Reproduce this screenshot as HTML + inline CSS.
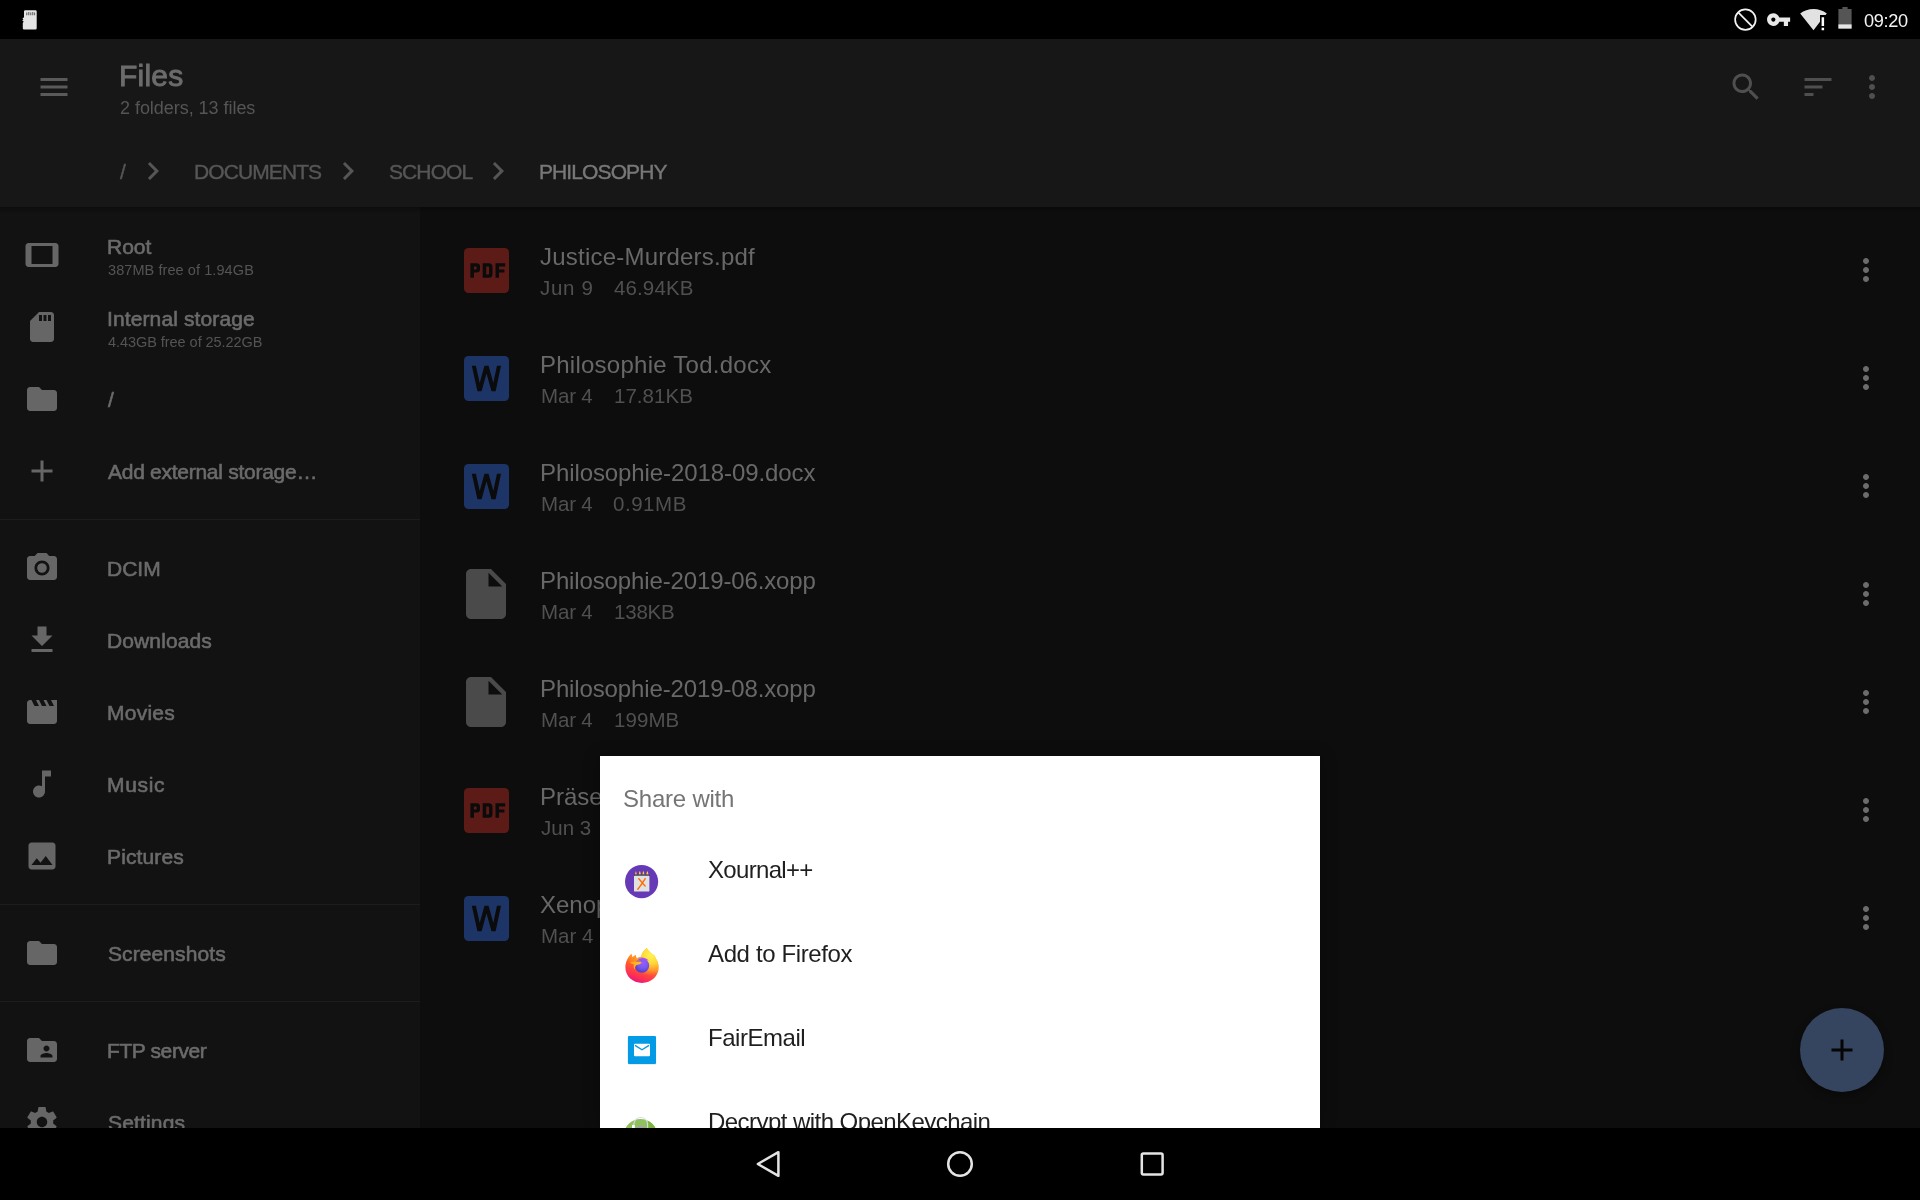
<!DOCTYPE html>
<html>
<head>
<meta charset="utf-8">
<title>Files</title>
<style>
html,body{margin:0;padding:0;background:#000;}
body{width:1920px;height:1200px;position:relative;overflow:hidden;font-family:"Liberation Sans",sans-serif;}
.abs{position:absolute;}
.t{position:absolute;white-space:nowrap;line-height:1;will-change:transform;}
svg{position:absolute;display:block;}
#status{left:0;top:0;width:1920px;height:39px;background:#000;}
#appbar{left:0;top:39px;width:1920px;height:168px;background:#171717;}
#abin{left:0;top:1px;width:1920px;height:167px;}
#shadow{left:0;top:207px;width:1920px;height:7px;background:linear-gradient(rgba(0,0,0,.28),rgba(0,0,0,0));}
#side{left:0;top:207px;width:420px;height:921px;background:#121212;overflow:hidden;}
#main{left:420px;top:207px;width:1500px;height:921px;background:#0d0d0d;overflow:hidden;}
#nav{left:0;top:1128px;width:1920px;height:72px;background:#000;}
.st{color:#6b6b6b;font-size:21px;left:108px;-webkit-text-stroke:.6px #6b6b6b;}
.ss{color:#545454;font-size:14.5px;left:108px;}
.fn{color:#686868;font-size:24px;left:540px;}
.fs{color:#505050;font-size:20.5px;left:540px;}
.sep{position:absolute;left:0;width:420px;height:1px;background:#1d1d1d;}
#dlg{left:600px;top:756px;width:720px;height:372px;background:#fff;overflow:hidden;box-shadow:0 0 14px rgba(0,0,0,.35);}
.an{color:#1f1f1f;font-size:24px;left:108px;}
.fi{width:45px;height:45px;border-radius:4.500px;}
.pdf{left:0;width:45px;text-align:center;top:14.500px;font-size:17px;font-weight:bold;color:#0a0a0a;letter-spacing:.5px;-webkit-text-stroke:.9px #0a0a0a;transform:scaleX(.86);}
.wl{left:0;width:45px;text-align:center;top:5px;font-size:35px;color:#0a0a0a;-webkit-text-stroke:.7px #0a0a0a;transform:scaleX(.88);}
</style>
</head>
<body>
<div id="status" class="abs">
<!-- sd card notification -->
<svg style="left:22px;top:9.5px" width="15" height="20" viewBox="0 0 15 20"><path d="M3.2 0.3h10.3a1.2 1.2 0 0 1 1.2 1.2v16.8a1.2 1.2 0 0 1-1.2 1.2H2a1.2 1.2 0 0 1-1.2-1.2v-5.6l1-.9-1.6-1.4 1.2-1 -1-1 1.6-1.2V1.5a1.2 1.2 0 0 1 1.2-1.2z" fill="#e4e4e4"/><path d="M4.3 2.6h1v2.6h-1zM6.3 2h1v3.2h-1zM8.3 2.6h1v2.6h-1zM10.3 2h1v3.2h-1zM12.2 2.6h.9v2.6h-.9z" fill="#555"/></svg>
<!-- blocked -->
<svg style="left:1733px;top:8px" width="25" height="24" viewBox="0 0 25 24"><circle cx="12.4" cy="11.6" r="10.3" fill="none" stroke="#f2f2f2" stroke-width="1.7"/><path d="M5.2 4.4L19.6 18.8" stroke="#f2f2f2" stroke-width="1.7" fill="none"/></svg>
<!-- vpn key -->
<svg style="left:1765.850px;top:6.900px" width="25.200" height="25.200" viewBox="0 0 24 24"><path fill="#e8e8e8" d="M12.65 10C11.83 7.67 9.61 6 7 6c-3.31 0-6 2.69-6 6s2.69 6 6 6c2.61 0 4.83-1.67 5.65-4H17v4h4v-4h2v-4H12.65zM7 14c-1.1 0-2-.9-2-2s.9-2 2-2 2 .9 2 2-.9 2-2 2z"/></svg>
<!-- wifi -->
<svg style="left:1799px;top:8px" width="30" height="24" viewBox="0 0 30 24"><path fill="#e2e2e2" d="M1.2 5.5C5 2.5 9.500 1 14.500 1c5 0 9.500 1.500 13.300 4.500l-1.300 1.600H21V13.700L14.500 22.200z"/><path fill="#fff" d="M22.600 9.200h2.500v8.800h-2.500zM22.600 19.700h2.500v2.500h-2.500z"/></svg>
<!-- battery -->
<svg style="left:1837px;top:6px" width="16" height="24" viewBox="0 0 16 24"><path fill="#555" d="M5.400 1h5.200v2h4V22.600H1.400V3h4z"/><path fill="#e6e6e6" d="M1.400 18.400H14.600V22.600H1.400z"/></svg>
<div class="t" id="clock" style="left:1863px;top:12px;font-size:18.200px;color:#f4f4f4;letter-spacing:-0.33px;margin-left:0.91px">09:20</div>
</div>
<div id="appbar" class="abs"><div id="abin" class="abs">
<svg style="left:36px;top:29px" width="36" height="36" viewBox="0 0 24 24"><path fill="#5a5a5a" d="M3 18h18v-2H3v2zm0-5h18v-2H3v2zm0-7v2h18V6H3z"/></svg>
<div class="t" id="title" style="left:120px;top:21px;font-size:30px;color:#6c6c6c;-webkit-text-stroke:.9px #6c6c6c;letter-spacing:0.22px;margin-left:-0.90px">Files</div>
<div class="t" id="subtitle" style="left:120px;top:59px;font-size:18px;color:#555;letter-spacing:-0.04px;margin-left:-0.36px">2 folders, 13 files</div>
<svg style="left:1728px;top:29px" width="36" height="36" viewBox="0 0 24 24"><path fill="#4f4f4f" d="M15.5 14h-.79l-.28-.27C15.41 12.59 16 11.11 16 9.5 16 5.91 13.09 3 9.500 3S3 5.910 3 9.500 5.910 16 9.500 16c1.610 0 3.090-.590 4.230-1.570l.270.280v.790l5 4.990L20.490 19l-4.990-5zm-6 0C7.010 14 5 11.990 5 9.500S7.010 5 9.500 5 14 7.010 14 9.500 11.990 14 9.500 14z"/></svg>
<svg style="left:1800px;top:29px" width="36" height="36" viewBox="0 0 24 24"><path fill="#4f4f4f" d="M3 18h6v-2H3v2zM3 6v2h18V6H3zm0 7h12v-2H3v2z"/></svg>
<svg style="left:1854px;top:29px" width="36" height="36" viewBox="0 0 24 24"><path fill="#4f4f4f" d="M12 8c1.1 0 2-.9 2-2s-.9-2-2-2-2 .9-2 2 .9 2 2 2zm0 2c-1.1 0-2 .9-2 2s.9 2 2 2 2-.9 2-2-.9-2-2-2zm0 6c-1.1 0-2 .9-2 2s.9 2 2 2 2-.9 2-2-.9-2-2-2z"/></svg>
<div class="t bc" style="left:120px;top:121px;font-size:21px;color:#565656;-webkit-text-stroke:.4px #565656">/</div>
<svg style="left:135px;top:113px" width="36" height="36" viewBox="0 0 24 24"><path fill="#565656" d="M10 6L8.59 7.41 13.17 12l-4.58 4.59L10 18l6-6z"/></svg>
<div class="t bc" id="bc1" style="left:195px;top:121px;font-size:21px;color:#565656;-webkit-text-stroke:.4px #565656;letter-spacing:-0.90px;margin-left:-0.72px">DOCUMENTS</div>
<svg style="left:330px;top:113px" width="36" height="36" viewBox="0 0 24 24"><path fill="#565656" d="M10 6L8.59 7.41 13.17 12l-4.58 4.59L10 18l6-6z"/></svg>
<div class="t bc" id="bc2" style="left:390px;top:121px;font-size:21px;color:#565656;-webkit-text-stroke:.4px #565656;letter-spacing:-0.90px;margin-left:-0.90px">SCHOOL</div>
<svg style="left:480px;top:113px" width="36" height="36" viewBox="0 0 24 24"><path fill="#565656" d="M10 6L8.59 7.41 13.17 12l-4.58 4.59L10 18l6-6z"/></svg>
<div class="t bc" id="bc3" style="left:540px;top:121px;font-size:21px;color:#787878;-webkit-text-stroke:.4px #787878;letter-spacing:-0.90px;margin-left:-0.90px">PHILOSOPHY</div>
</div></div>
<div id="side" class="abs">
<svg style="left:24px;top:30px" width="36" height="36" viewBox="0 0 24 24"><path fill="#666" d="M21 4H3c-1.1 0-2 .9-2 2v12c0 1.1.9 2 2 2h18c1.1 0 2-.9 2-2V6c0-1.1-.9-2-2-2zm-2 14H5V6h14v12z"/></svg>
<div class="t st" id="r1" style="top:28.8px;letter-spacing:0.00px;margin-left:-0.90px">Root</div>
<div class="t ss" id="r1s" style="top:56.3px;letter-spacing:0.08px;margin-left:0.00px">387MB free of 1.94GB</div>
<svg style="left:24px;top:102px" width="36" height="36" viewBox="0 0 24 24"><path fill="#666" d="M18 2h-8L4.02 8 4 20c0 1.1.9 2 2 2h12c1.1 0 2-.9 2-2V4c0-1.1-.9-2-2-2zm-6 6h-2V4h2v4zm3 0h-2V4h2v4zm3 0h-2V4h2v4z"/></svg>
<div class="t st" id="r2" style="top:100.8px;letter-spacing:0.12px;margin-left:-0.90px">Internal storage</div>
<div class="t ss" id="r2s" style="top:128.3px;letter-spacing:-0.05px;margin-left:0.00px">4.43GB free of 25.22GB</div>
<svg style="left:24px;top:174px" width="36" height="36" viewBox="0 0 24 24"><path fill="#666" d="M10 4H4c-1.1 0-1.99.9-1.99 2L2 18c0 1.1.9 2 2 2h16c1.1 0 2-.9 2-2V8c0-1.1-.9-2-2-2h-8l-2-2z"/></svg>
<div class="t st" id="s3" style="top:182px">/</div>
<svg style="left:24px;top:246px" width="36" height="36" viewBox="0 0 24 24"><path fill="#666" d="M19 13h-6v6h-2v-6H5v-2h6V5h2v6h6v2z"/></svg>
<div class="t st" id="s4" style="top:254px;letter-spacing:-0.27px;margin-left:0.00px">Add external storage…</div>
<svg style="left:24px;top:343px" width="36" height="36" viewBox="0 0 24 24"><path fill="#666" fill-rule="evenodd" d="M9 2L7.17 4H4c-1.1 0-2 .9-2 2v12c0 1.1.9 2 2 2h16c1.1 0 2-.9 2-2V6c0-1.1-.9-2-2-2h-3.17L15 2H9zm3 15c-2.76 0-5-2.24-5-5s2.24-5 5-5 5 2.24 5 5-2.24 5-5 5zm0-8.2a3.2 3.2 0 1 0 0 6.4 3.2 3.2 0 0 0 0-6.4z"/></svg>
<div class="t st" id="s5" style="top:351px;letter-spacing:0.00px;margin-left:-0.90px">DCIM</div>
<svg style="left:24px;top:415px" width="36" height="36" viewBox="0 0 24 24"><path fill="#666" d="M19 9h-4V3H9v6H5l7 7 7-7zM5 18v2h14v-2H5z"/></svg>
<div class="t st" id="s6" style="top:423px;letter-spacing:0.11px;margin-left:-0.90px">Downloads</div>
<svg style="left:24px;top:487px" width="36" height="36" viewBox="0 0 24 24"><path fill="#666" d="M18 4l2 4h-3l-2-4h-2l2 4h-3l-2-4H8l2 4H7L5 4H4c-1.1 0-1.99.9-1.99 2L2 18c0 1.1.9 2 2 2h16c1.1 0 2-.9 2-2V4h-4z"/></svg>
<div class="t st" id="s7" style="top:495px;letter-spacing:0.24px;margin-left:-0.90px">Movies</div>
<svg style="left:24px;top:559px" width="36" height="36" viewBox="0 0 24 24"><path fill="#666" d="M12 3v10.55c-.59-.34-1.27-.55-2-.55-2.21 0-4 1.79-4 4s1.79 4 4 4 4-1.79 4-4V7h4V3h-6z"/></svg>
<div class="t st" id="s8" style="top:567px;letter-spacing:0.67px;margin-left:-0.90px">Music</div>
<svg style="left:24px;top:631px" width="36" height="36" viewBox="0 0 24 24"><path fill="#666" d="M21 19V5c0-1.1-.9-2-2-2H5c-1.1 0-2 .9-2 2v14c0 1.1.9 2 2 2h14c1.1 0 2-.9 2-2zM8.5 13.5l2.5 3.01L14.5 12l4.5 6H5l3.5-4.5z"/></svg>
<div class="t st" id="s9" style="top:639px;letter-spacing:0.13px;margin-left:-0.90px">Pictures</div>
<svg style="left:24px;top:728px" width="36" height="36" viewBox="0 0 24 24"><path fill="#666" d="M10 4H4c-1.1 0-1.99.9-1.99 2L2 18c0 1.1.9 2 2 2h16c1.1 0 2-.9 2-2V8c0-1.1-.9-2-2-2h-8l-2-2z"/></svg>
<div class="t st" id="s10" style="top:736px;letter-spacing:0.09px;margin-left:0.00px">Screenshots</div>
<svg style="left:24px;top:825px" width="36" height="36" viewBox="0 0 24 24"><path fill="#666" d="M20 6h-8l-2-2H4c-1.1 0-1.99.9-1.99 2L2 18c0 1.1.9 2 2 2h16c1.1 0 2-.9 2-2V8c0-1.1-.9-2-2-2zm-5 3c1.1 0 2 .9 2 2s-.9 2-2 2-2-.9-2-2 .9-2 2-2zm4 8h-8v-1c0-1.33 2.67-2 4-2s4 .67 4 2v1z"/></svg>
<div class="t st" id="s11" style="top:833px;letter-spacing:-0.40px;margin-left:-0.90px">FTP server</div>
<svg style="left:24px;top:897px" width="36" height="36" viewBox="0 0 24 24"><path fill="#666" d="M19.43 12.98c.04-.32.07-.64.07-.98s-.03-.66-.07-.98l2.11-1.65c.19-.15.24-.42.12-.64l-2-3.46c-.12-.22-.39-.3-.61-.22l-2.49 1c-.52-.4-1.08-.73-1.69-.98l-.38-2.65C14.46 2.18 14.25 2 14 2h-4c-.25 0-.46.18-.49.42l-.38 2.65c-.61.25-1.17.59-1.69.98l-2.49-1c-.23-.09-.49 0-.61.22l-2 3.46c-.13.22-.07.49.12.64l2.11 1.65c-.04.32-.07.65-.07.98s.03.66.07.98l-2.11 1.65c-.19.15-.24.42-.12.64l2 3.46c.12.22.39.3.61.22l2.49-1c.52.4 1.08.73 1.69.98l.38 2.65c.03.24.24.42.49.42h4c.25 0 .46-.18.49-.42l.38-2.65c.61-.25 1.17-.59 1.69-.98l2.49 1c.23.09.49 0 .61-.22l2-3.46c.12-.22.07-.49-.12-.64l-2.11-1.65zM12 15.5c-1.93 0-3.5-1.57-3.5-3.5s1.57-3.5 3.5-3.5 3.5 1.57 3.5 3.5-1.57 3.5-3.5 3.5z"/></svg>
<div class="t st" id="s12" style="top:905px;letter-spacing:0.16px;margin-left:0.00px">Settings</div>
<div class="sep" style="top:312px"></div>
<div class="sep" style="top:697px"></div>
<div class="sep" style="top:794px"></div>
</div>
<div id="main" class="abs">
<div class="abs fi" style="left:43.5px;top:40.5px;background:#5c1b16"><svg style="left:0;top:0" width="45" height="45" viewBox="0 0 45 45"><path fill="#0b0b0b" fill-rule="evenodd" d="M6.4 15.3h6.200q3.400 0 3.400 3.300v2.700q0 3.300-3.400 3.300h-2.700v5.200H6.400zM9.900 18.500v3h1.900q.900 0 .900-.900v-1.200q0-.900-.900-.900zM18.700 15.300h6.200q3.600 0 3.600 3.500v7.500q0 3.500-3.600 3.500h-6.200zM22.200 18.500v8.100h1.900q1 0 1-1v-6.100q0-1-1-1zM31.500 15.300h9.700v3.200h-6.200v3h5.400v3.100h-5.400v5.200h-3.500z"/></svg></div>
<div class="t fn" id="f0" style="left:120px;top:38.2px;letter-spacing:0.22px;margin-left:0.00px">Justice-Murders.pdf</div>
<div class="t fs" id="d0" style="left:120px;top:70.8px;letter-spacing:0.68px;margin-left:0.00px">Jun 9</div>
<div class="t fs" id="z0" style="left:193px;top:70.8px;letter-spacing:0.12px;margin-left:0.54px">46.94KB</div>
<svg style="left:1428px;top:45px" width="36" height="36" viewBox="0 0 24 24"><path fill="#6c6c6c" d="M12 8c1.1 0 2-.9 2-2s-.9-2-2-2-2 .9-2 2 .9 2 2 2zm0 2c-1.1 0-2 .9-2 2s.9 2 2 2 2-.9 2-2-.9-2-2-2zm0 6c-1.1 0-2 .9-2 2s.9 2 2 2 2-.9 2-2-.9-2-2-2z"/></svg>
<div class="abs fi" style="left:43.5px;top:148.5px;background:#1d3566"><svg style="left:0;top:0" width="45" height="45" viewBox="0 0 45 45"><clipPath id="wc1"><rect x="0" y="9.850" width="45" height="25.500"/></clipPath><polyline clip-path="url(#wc1)" points="9,6 15.500,35.350 22.500,9.850 29.600,35.350 35.750,6" fill="none" stroke="#0b0b0b" stroke-width="4" stroke-linejoin="miter" stroke-miterlimit="10"/></svg></div>
<div class="t fn" id="f1" style="left:120px;top:146.2px;letter-spacing:0.25px;margin-left:-0.27px">Philosophie Tod.docx</div>
<div class="t fs" id="d1" style="left:120px;top:178.8px;letter-spacing:-0.16px;margin-left:0.63px">Mar 4</div>
<div class="t fs" id="z1" style="left:193px;top:178.8px;letter-spacing:0.03px;margin-left:0.99px">17.81KB</div>
<svg style="left:1428px;top:153px" width="36" height="36" viewBox="0 0 24 24"><path fill="#6c6c6c" d="M12 8c1.1 0 2-.9 2-2s-.9-2-2-2-2 .9-2 2 .9 2 2 2zm0 2c-1.1 0-2 .9-2 2s.9 2 2 2 2-.9 2-2-.9-2-2-2zm0 6c-1.1 0-2 .9-2 2s.9 2 2 2 2-.9 2-2-.9-2-2-2z"/></svg>
<div class="abs fi" style="left:43.5px;top:256.5px;background:#1d3566"><svg style="left:0;top:0" width="45" height="45" viewBox="0 0 45 45"><clipPath id="wc2"><rect x="0" y="9.850" width="45" height="25.500"/></clipPath><polyline clip-path="url(#wc2)" points="9,6 15.500,35.350 22.500,9.850 29.600,35.350 35.750,6" fill="none" stroke="#0b0b0b" stroke-width="4" stroke-linejoin="miter" stroke-miterlimit="10"/></svg></div>
<div class="t fn" id="f2" style="left:120px;top:254.2px;letter-spacing:-0.09px;margin-left:-0.27px">Philosophie-2018-09.docx</div>
<div class="t fs" id="d2" style="left:120px;top:286.8px;letter-spacing:-0.16px;margin-left:0.63px">Mar 4</div>
<div class="t fs" id="z2" style="left:193px;top:286.8px;letter-spacing:0.54px;margin-left:-0.36px">0.91MB</div>
<svg style="left:1428px;top:261px" width="36" height="36" viewBox="0 0 24 24"><path fill="#6c6c6c" d="M12 8c1.1 0 2-.9 2-2s-.9-2-2-2-2 .9-2 2 .9 2 2 2zm0 2c-1.1 0-2 .9-2 2s.9 2 2 2 2-.9 2-2-.9-2-2-2zm0 6c-1.1 0-2 .9-2 2s.9 2 2 2 2-.9 2-2-.9-2-2-2z"/></svg>
<svg style="left:36px;top:357px" width="60" height="60" viewBox="0 0 24 24"><path fill="#4a4a4a" d="M6 2c-1.1 0-1.99.9-1.99 2L4 20c0 1.1.89 2 1.99 2H18c1.1 0 2-.9 2-2V8l-6-6H6zm7 7V3.5L18.5 9H13z"/></svg>
<div class="t fn" id="f3" style="left:120px;top:362.2px;letter-spacing:-0.13px;margin-left:-0.27px">Philosophie-2019-06.xopp</div>
<div class="t fs" id="d3" style="left:120px;top:394.8px;letter-spacing:-0.16px;margin-left:0.63px">Mar 4</div>
<div class="t fs" id="z3" style="left:193px;top:394.8px;letter-spacing:-0.21px;margin-left:1.17px">138KB</div>
<svg style="left:1428px;top:369px" width="36" height="36" viewBox="0 0 24 24"><path fill="#6c6c6c" d="M12 8c1.1 0 2-.9 2-2s-.9-2-2-2-2 .9-2 2 .9 2 2 2zm0 2c-1.1 0-2 .9-2 2s.9 2 2 2 2-.9 2-2-.9-2-2-2zm0 6c-1.1 0-2 .9-2 2s.9 2 2 2 2-.9 2-2-.9-2-2-2z"/></svg>
<svg style="left:36px;top:465px" width="60" height="60" viewBox="0 0 24 24"><path fill="#4a4a4a" d="M6 2c-1.1 0-1.99.9-1.99 2L4 20c0 1.1.89 2 1.99 2H18c1.1 0 2-.9 2-2V8l-6-6H6zm7 7V3.5L18.5 9H13z"/></svg>
<div class="t fn" id="f4" style="left:120px;top:470.2px;letter-spacing:-0.13px;margin-left:-0.27px">Philosophie-2019-08.xopp</div>
<div class="t fs" id="d4" style="left:120px;top:502.8px;letter-spacing:-0.16px;margin-left:0.63px">Mar 4</div>
<div class="t fs" id="z4" style="left:193px;top:502.8px;letter-spacing:0.07px;margin-left:1.35px">199MB</div>
<svg style="left:1428px;top:477px" width="36" height="36" viewBox="0 0 24 24"><path fill="#6c6c6c" d="M12 8c1.1 0 2-.9 2-2s-.9-2-2-2-2 .9-2 2 .9 2 2 2zm0 2c-1.1 0-2 .9-2 2s.9 2 2 2 2-.9 2-2-.9-2-2-2zm0 6c-1.1 0-2 .9-2 2s.9 2 2 2 2-.9 2-2-.9-2-2-2z"/></svg>
<div class="abs fi" style="left:43.5px;top:580.5px;background:#5c1b16"><svg style="left:0;top:0" width="45" height="45" viewBox="0 0 45 45"><path fill="#0b0b0b" fill-rule="evenodd" d="M6.4 15.3h6.200q3.400 0 3.400 3.300v2.700q0 3.300-3.400 3.300h-2.700v5.200H6.400zM9.900 18.500v3h1.900q.900 0 .900-.900v-1.200q0-.900-.900-.900zM18.700 15.300h6.200q3.600 0 3.600 3.500v7.500q0 3.500-3.600 3.500h-6.200zM22.200 18.500v8.100h1.900q1 0 1-1v-6.100q0-1-1-1zM31.500 15.300h9.700v3.200h-6.200v3h5.400v3.100h-5.400v5.200h-3.500z"/></svg></div>
<div class="t fn" id="f5" style="left:120px;top:578.2px">Präsentation.pdf</div>
<div class="t fs" id="d5" style="left:120px;top:610.8px;letter-spacing:0.00px;margin-left:0.63px">Jun 3</div>
<div class="t fs" id="z5" style="left:193px;top:610.8px">1.2MB</div>
<svg style="left:1428px;top:585px" width="36" height="36" viewBox="0 0 24 24"><path fill="#6c6c6c" d="M12 8c1.1 0 2-.9 2-2s-.9-2-2-2-2 .9-2 2 .9 2 2 2zm0 2c-1.1 0-2 .9-2 2s.9 2 2 2 2-.9 2-2-.9-2-2-2zm0 6c-1.1 0-2 .9-2 2s.9 2 2 2 2-.9 2-2-.9-2-2-2z"/></svg>
<div class="abs fi" style="left:43.5px;top:688.5px;background:#1d3566"><svg style="left:0;top:0" width="45" height="45" viewBox="0 0 45 45"><clipPath id="wc3"><rect x="0" y="9.850" width="45" height="25.500"/></clipPath><polyline clip-path="url(#wc3)" points="9,6 15.500,35.350 22.500,9.850 29.600,35.350 35.750,6" fill="none" stroke="#0b0b0b" stroke-width="4" stroke-linejoin="miter" stroke-miterlimit="10"/></svg></div>
<div class="t fn" id="f6" style="left:120px;top:686.2px">Xenophon.docx</div>
<div class="t fs" id="d6" style="left:120px;top:718.8px;letter-spacing:0.00px;margin-left:0.63px">Mar 4</div>
<div class="t fs" id="z6" style="left:193px;top:718.8px">21KB</div>
<svg style="left:1428px;top:693px" width="36" height="36" viewBox="0 0 24 24"><path fill="#6c6c6c" d="M12 8c1.1 0 2-.9 2-2s-.9-2-2-2-2 .9-2 2 .9 2 2 2zm0 2c-1.1 0-2 .9-2 2s.9 2 2 2 2-.9 2-2-.9-2-2-2zm0 6c-1.1 0-2 .9-2 2s.9 2 2 2 2-.9 2-2-.9-2-2-2z"/></svg>
<div class="abs" style="left:1380px;top:801px;width:84px;height:84px;border-radius:42px;background:#35455f;box-shadow:0 4px 8px rgba(0,0,0,.35)"><svg style="left:24px;top:24px" width="36" height="36" viewBox="0 0 24 24"><path fill="#050505" d="M19 13h-6v6h-2v-6H5v-2h6V5h2v6h6v2z"/></svg></div>
</div>
<div id="shadow" class="abs"></div>
<div id="dlg" class="abs">
<div class="t" id="sw" style="left:24px;top:31.4px;font-size:24px;color:#757575;letter-spacing:-0.22px;margin-left:-0.54px">Share with</div>
<!-- xournal -->
<svg style="left:25.400px;top:109.400px" width="33.200" height="33.200" viewBox="0 0 33.200 33.200"><circle cx="16.600" cy="16.600" r="16.600" fill="#6639b7"/><path d="M10 9.800l.600-3q.300-.800.600 0l.600 3zM13.700 9.800l.700-3.200q.400-.700.800 0l.700 3.200zM17.400 9.800l.600-3.200q.400-.700.800 0l.600 3.200zM21.200 9.800l.800-3.200q.400-.600.800.200l.800 3z" fill="#fdd13a"/><rect x="9" y="9.500" width="15.400" height="1.600" fill="#3f3f46"/><rect x="9" y="10.800" width="15.400" height="15.800" rx=".7" fill="#e1e1e1"/><path d="M13.800 13.700L20.200 21.100M20.200 13.700C18 17 15.400 21 12.800 24.200" stroke="#ff6a00" stroke-width="1.400" stroke-linecap="round" fill="none"/></svg>
<div class="t an" id="a0" style="top:101.600px;letter-spacing:-0.68px;margin-left:0.36px">Xournal++</div>
<!-- firefox -->
<svg style="left:18px;top:186px" width="48" height="48" viewBox="0 0 48 48"><defs>
<linearGradient id="ffb" x1="30" y1="8" x2="17" y2="41" gradientUnits="userSpaceOnUse"><stop offset="0" stop-color="#ffbd2f"/><stop offset=".3" stop-color="#ff9a1f"/><stop offset=".55" stop-color="#ff5a30"/><stop offset=".8" stop-color="#ff3150"/><stop offset="1" stop-color="#e5108a"/></linearGradient>
<radialGradient id="ffy" cx="33" cy="13" r="21" gradientUnits="userSpaceOnUse"><stop offset="0" stop-color="#fff450"/><stop offset=".4" stop-color="#ffdc3c" stop-opacity=".95"/><stop offset=".75" stop-color="#ffb62e" stop-opacity=".55"/><stop offset="1" stop-color="#ff9a2a" stop-opacity="0"/></radialGradient>
<radialGradient id="ffg" cx="25" cy="21" r="10" gradientUnits="userSpaceOnUse"><stop offset="0" stop-color="#9a5bff"/><stop offset=".5" stop-color="#7a58ee"/><stop offset="1" stop-color="#4c3bc4"/></radialGradient>
<linearGradient id="ffh" x1="12" y1="19" x2="24" y2="24" gradientUnits="userSpaceOnUse"><stop offset="0" stop-color="#ffa51c"/><stop offset="1" stop-color="#ffc02a"/></linearGradient></defs>
<path fill="url(#ffb)" d="M13.600 11.800L14.400 15.200 17.600 13 18.600 16.400C20 15.600 21.600 15 23.200 14.800 23.600 11 26 8 28.800 6 30.400 9 33.600 11.600 36.400 13.400 36.800 14.400 37.600 15.600 38 16.800 39.800 19.200 40.600 22 40.600 25.600 40.600 34.400 33.200 41 24 41 14.800 41 7.400 34.400 7.400 25.600 7.400 20.400 9.600 15.200 13.600 11.800Z"/>
<path fill="url(#ffy)" d="M13.600 11.800L14.400 15.200 17.600 13 18.600 16.400C20 15.600 21.600 15 23.200 14.800 23.600 11 26 8 28.800 6 30.400 9 33.600 11.600 36.400 13.400 36.800 14.400 37.600 15.600 38 16.800 39.800 19.200 40.600 22 40.600 25.600 40.600 34.400 33.200 41 24 41 14.800 41 7.400 34.400 7.400 25.600 7.400 20.400 9.600 15.200 13.600 11.800Z"/>
<circle cx="24" cy="23.600" r="7.200" fill="url(#ffg)"/>
<path fill="#b14bf4" d="M19.500 16.600C22.500 14.600 27.200 15 30.800 18.600 29.600 18.300 28.400 18.200 27.300 18.400 25.200 16.800 22 16.300 19.500 16.600Z"/>
<path fill="url(#ffh)" d="M12 20.200C15 19.200 20 19.400 24 20.400 22.600 21.900 20.600 22.700 18.400 23 17.200 24.200 16.700 25.800 17.100 27.600L16.100 26.400C15.400 24.400 15.700 23 16.600 22.400 14.600 22.300 13 21.500 12 20.200Z"/>
<path fill="#ff8a1e" d="M18.600 16.400C20.400 17.200 22.400 18.600 24 20.400 20 19.400 15 19.200 12 20.200 11 19 12 17 14.400 15.200L17.600 13Z" opacity=".55"/>
</svg>
<div class="t an" id="a1" style="top:185.500px;letter-spacing:-0.37px;margin-left:0.36px">Add to Firefox</div>
<!-- fairemail -->
<svg style="left:18px;top:270px" width="48" height="48" viewBox="0 0 48 48"><rect x="10.100" y="10.400" width="28.100" height="28.100" rx="1.200" fill="#7a8fa0" opacity=".35"/><rect x="9.900" y="9.900" width="28.100" height="28.100" rx="1.200" fill="#039be5"/><rect x="16" y="17.800" width="16" height="12.400" rx="1" fill="#fdfdfd"/><path d="M17.400 19.600L24 23.800 30.600 19.600" stroke="#039be5" stroke-width="1.350" fill="none" stroke-linecap="round"/></svg>
<div class="t an" id="a2" style="top:270px;letter-spacing:-0.46px;margin-left:-0.36px">FairEmail</div>
<!-- openkeychain -->
<svg style="left:18px;top:344px" width="48" height="48" viewBox="0 0 48 48"><clipPath id="okc"><circle cx="22.500" cy="35.500" r="16.600"/></clipPath><circle cx="22.500" cy="35.500" r="16.600" fill="#8fc05e"/><rect x="30" y="15" width="12" height="40" fill="#7cb443" clip-path="url(#okc)"/><path d="M15.900 28V23.500a7 7.600 0 0 1 13.700 0V28" fill="none" stroke="#d9d9e0" stroke-width="1.100"/><rect x="14" y="24.900" width="2.800" height="4" fill="#fff"/><path d="M18.300 28.200c1-1.600 2.800-2.700 4.800-2.700s3.800 1.100 4.800 2.700z" fill="#a3a3a3"/></svg>
<div class="t an" id="a3" style="top:354px;letter-spacing:-0.55px;margin-left:-0.36px">Decrypt with OpenKeychain</div>
</div>
<div id="nav" class="abs">
<svg style="left:752px;top:20px" width="32" height="32" viewBox="0 0 32 32"><path d="M26.400 4.200L5.800 16l20.600 11.800z" transform="translate(0 0)" fill="none" stroke="#e4e4e4" stroke-width="2.500" stroke-linejoin="round"/></svg>
<svg style="left:944px;top:20px" width="32" height="32" viewBox="0 0 32 32"><circle cx="16" cy="16" r="11.800" fill="none" stroke="#e4e4e4" stroke-width="2.500"/></svg>
<svg style="left:1136px;top:20px" width="32" height="32" viewBox="0 0 32 32"><rect x="5.800" y="5.600" width="20.800" height="20.800" rx="1.600" fill="none" stroke="#e4e4e4" stroke-width="2.500"/></svg>
</div>
</body>
</html>
